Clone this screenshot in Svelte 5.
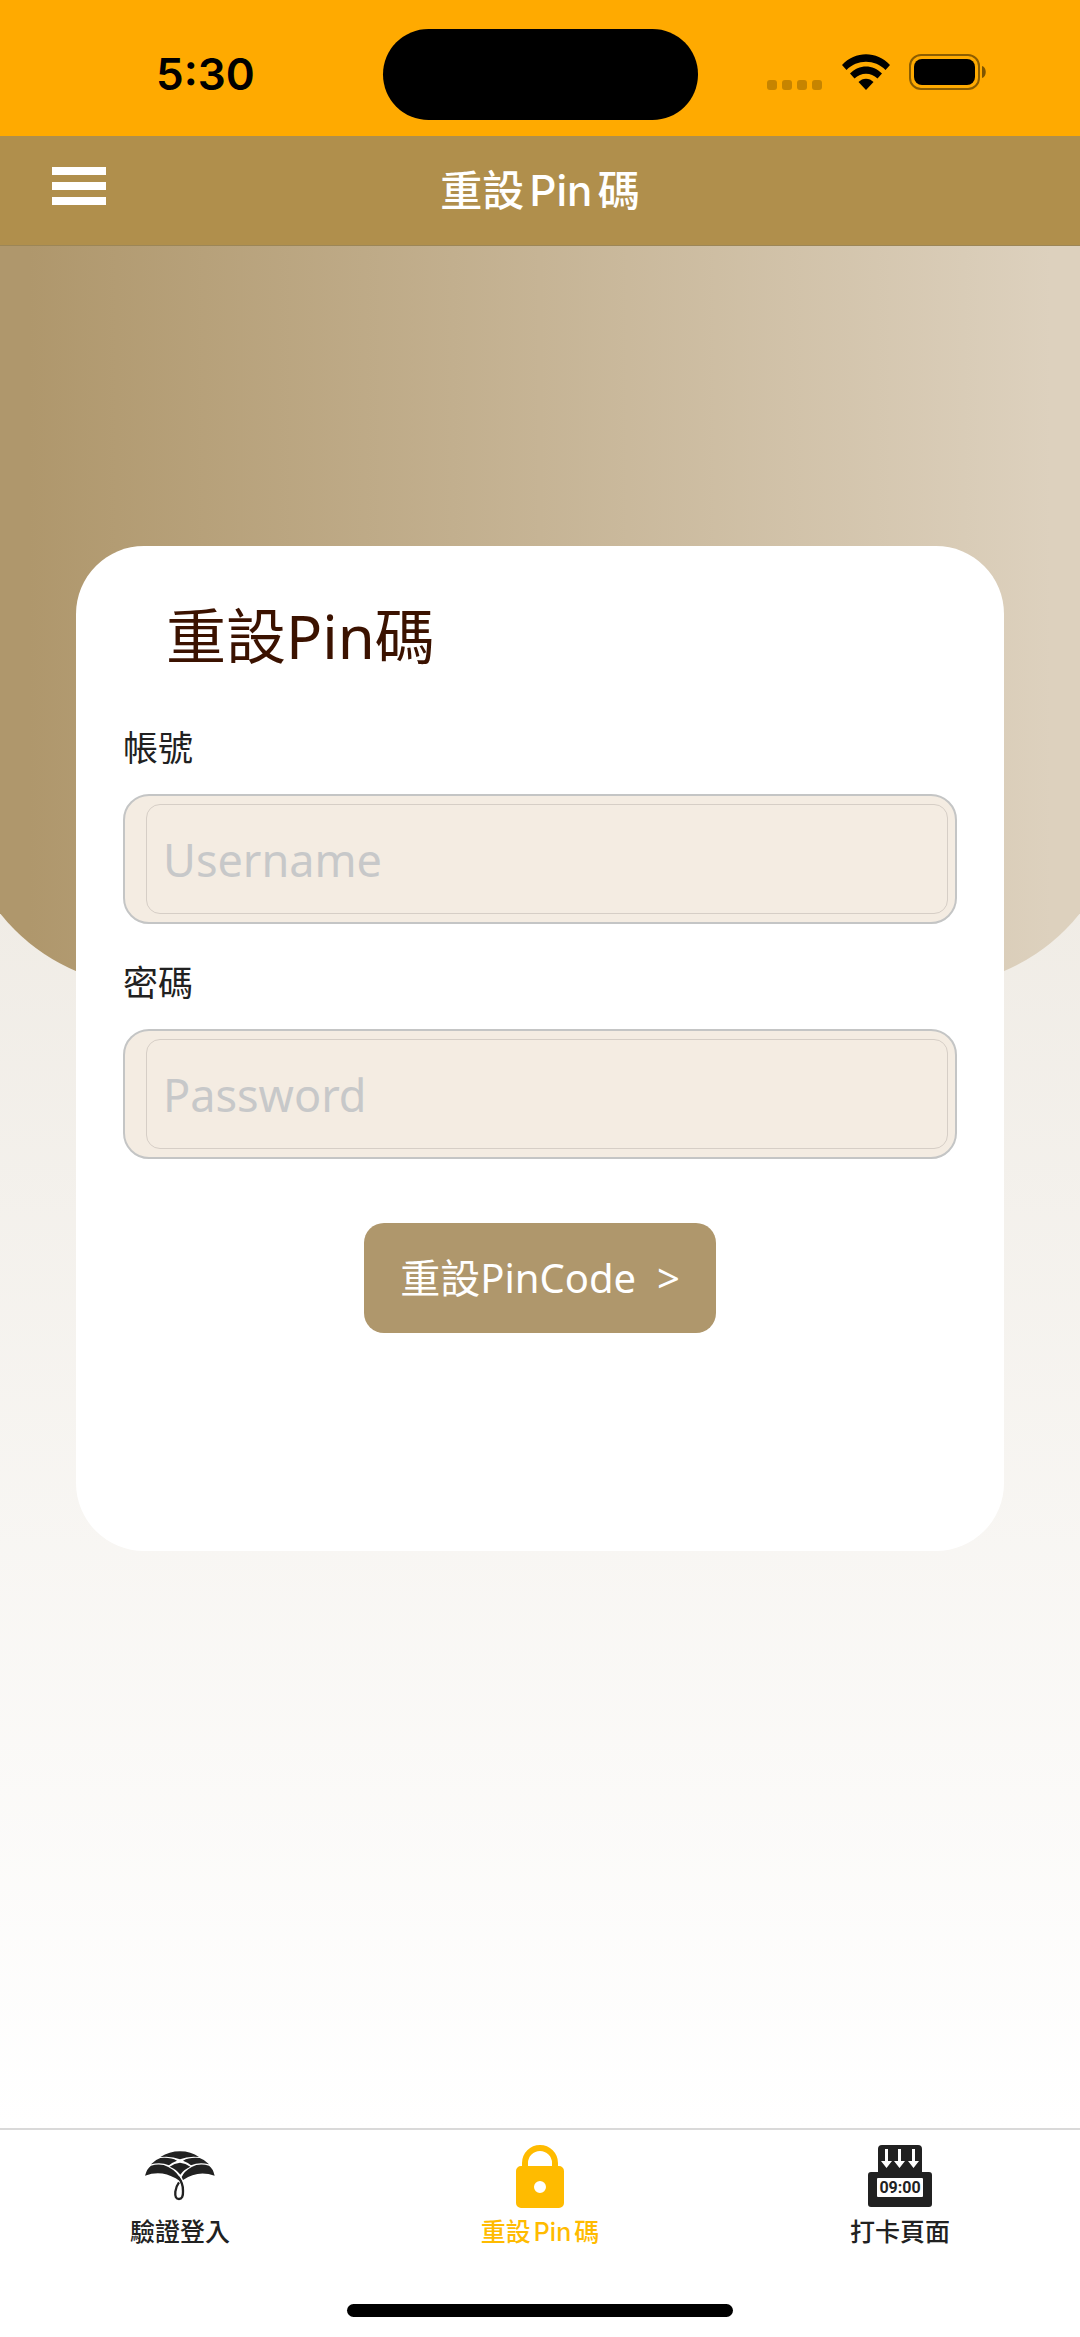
<script lang="ts">
  let username = $state("");
  let password = $state("");

  const tabs = [
    { id: "login", label: "驗證登入" },
    { id: "reset", label: "重設Pin碼" },
    { id: "punch", label: "打卡頁面" },
  ];

  let active = $state("reset");

  function submit(event: SubmitEvent) {
    event.preventDefault();
  }
</script>

<div class="screen">
  <div class="status-bar">
    <span class="time">5:30</span>
    <div class="island"></div>
    <div class="indicators">
      <svg class="dots" width="56" height="10" viewBox="0 0 56 10" aria-hidden="true">
        <rect x="0" width="10" height="10" rx="3" />
        <rect x="15" width="10" height="10" rx="3" />
        <rect x="30" width="10" height="10" rx="3" />
        <rect x="45" width="10" height="10" rx="3" />
      </svg>
      <svg class="wifi" width="48" height="36" viewBox="0 0 48 36" aria-hidden="true">
        <path d="M0 11C13-3.500 35-3.500 48 11l-4.500 5C33 5 15 5 4.500 16z" />
        <path d="M8 19.500c9-9.500 23-9.500 32 0L35.500 24.500c-6.500-6.500-16.500-6.500-23 0z" />
        <path d="M16.500 28c4-4.500 11-4.500 15 0L24 36z" />
      </svg>
      <svg class="battery" width="79" height="36" viewBox="0 0 79 36" aria-hidden="true">
        <rect x="1" y="1" width="69" height="34" rx="11" fill="none" stroke="#000" stroke-opacity=".45" stroke-width="2" />
        <rect x="5" y="5" width="61" height="26" rx="8" />
        <path d="M73 12c5 1 5 11 0 12z" fill-opacity=".5" />
      </svg>
    </div>
  </div>

  <header class="top-bar">
    <button class="menu-button" type="button" aria-label="選單">
      <span></span>
      <span></span>
      <span></span>
    </button>
    <h1>重設Pin碼</h1>
  </header>

  <main>
    <form class="card" onsubmit={submit}>
      <h2>重設Pin碼</h2>

      <label for="username">帳號</label>
      <div class="field">
        <input
          id="username"
          type="text"
          placeholder="Username"
          autocomplete="username"
          bind:value={username}
        />
      </div>

      <label for="password">密碼</label>
      <div class="field">
        <input
          id="password"
          type="password"
          placeholder="Password"
          autocomplete="current-password"
          bind:value={password}
        />
      </div>

      <button class="submit-button" type="submit">重設PinCode&nbsp; &gt;</button>
    </form>
  </main>

  <nav class="tab-bar">
    <div class="tabs">
      {#each tabs as tab (tab.id)}
        <button
          class="tab"
          class:tab--active={active === tab.id}
          type="button"
          onclick={() => (active = tab.id)}
        >
          {#if tab.id === "login"}
            <svg width="72" height="64" viewBox="129 76 216 192" aria-hidden="true">
              <path d="M178 112Q205 95 237 95Q270 95 294 112Q262 108 237 119Q212 108 178 112Z" />
              <path d="M150 134Q162 120 178 115Q208 112 228 123Q214 128 204 137Q180 127 150 134Z" />
              <path d="M324 134Q312 120 296 115Q266 112 246 123Q260 128 270 137Q294 127 324 134Z" />
              <path d="M206 141Q220 131 237 129Q254 131 268 141Q247 150 238 165Q226 149 206 141Z" />
              <path d="M132 168Q138 146 150 138Q180 130 202 142Q230 156 243 186Q234 184 224 176Q180 150 132 168Z" />
              <path d="M341 168Q336 146 324 138Q294 130 272 142Q250 154 242 172L246 181Q290 150 341 168Z" />
              <path
                d="M232 173Q247 192 246 214Q247 238 234 238Q221 238 223 216Q225 200 234 188"
                fill="none"
                stroke="currentColor"
                stroke-width="7"
              />
            </svg>
          {:else if tab.id === "reset"}
            <svg width="50" height="64" viewBox="0 0 50 64" aria-hidden="true">
              <path d="M10 24V18a15 15 0 0 1 30 0v6" fill="none" stroke="currentColor" stroke-width="6" />
              <path
                fill-rule="evenodd"
                d="M6 21h38a5 5 0 0 1 5 5v32a5 5 0 0 1-5 5H6a5 5 0 0 1-5-5V26a5 5 0 0 1 5-5zM25 36a6 6 0 1 0 0 12a6 6 0 1 0 0-12z"
              />
            </svg>
          {:else}
            <svg width="64" height="64" viewBox="0 0 64 64" aria-hidden="true">
              <path d="M10 27V4a4 4 0 0 1 4-4h36a4 4 0 0 1 4 4v23h7a3 3 0 0 1 3 3v29a3 3 0 0 1-3 3H3a3 3 0 0 1-3-3V30a3 3 0 0 1 3-3z" />
              <rect x="9" y="33" width="46" height="19" rx="1" fill="#fff" />
              <path
                d="M17 4h3v12h4l-5.500 7l-5.500-7h4zM30 4h3v12h4l-5.500 7l-5.500-7h4zM44 4h3v12h4l-5.500 7l-5.500-7h4z"
                fill="#fff"
              />
              <text x="32" y="48" text-anchor="middle">09:00</text>
            </svg>
          {/if}
          <span>{tab.label}</span>
        </button>
      {/each}
    </div>
    <div class="home-indicator"></div>
  </nav>
</div>

<style>
  :global(body) {
    margin: 0;
  }

  .screen {
    display: flex;
    flex-direction: column;
    min-height: 100vh;
    font-family: "Noto Sans", "Noto Sans CJK TC", sans-serif;
    color: #212121;
  }

  h1,
  h2 {
    margin: 0;
  }

  button {
    border: 0;
    padding: 0;
    background: none;
    font: inherit;
    color: inherit;
    cursor: pointer;
  }

  .status-bar {
    display: grid;
    grid-template-columns: 1fr auto 1fr;
    align-items: center;
    box-sizing: border-box;
    height: 136px;
    padding: 0 92px 0 156px;
    background: #ffaa00;
    color: #000;
  }

  .time {
    padding-top: 12px;
    font: 600 44px/56px Inter, sans-serif;
  }

  .island {
    width: 315px;
    height: 91px;
    margin: 12px 32px 0 -32px;
    border-radius: 46px;
    background: #000;
  }

  .indicators {
    display: flex;
    align-items: flex-end;
    justify-content: flex-end;
    gap: 19px;
    padding-top: 8px;
  }

  .dots {
    opacity: 0.22;
  }

  .top-bar {
    display: grid;
    grid-template-columns: 1fr auto 1fr;
    align-items: center;
    box-sizing: border-box;
    height: 110px;
    padding: 0 52px;
    border-bottom: 1px solid #9c8657;
    background: #b08f4c;
    color: #fff;
  }

  .menu-button {
    display: grid;
    gap: 7px;
    width: 54px;
    padding-bottom: 10px;
  }

  .menu-button span {
    height: 8px;
    background: #fff;
  }

  h1 {
    font: 500 42px/58px Inter, "Noto Sans CJK TC", sans-serif;
    text-autospace: normal;
  }

  main {
    position: relative;
    isolation: isolate;
    overflow: hidden;
    flex: 1;
    padding: 300px 76px;
    background: linear-gradient(to bottom, #e8e2d8, #fff);
  }

  main::before {
    position: absolute;
    inset: 0 -41px auto;
    z-index: -1;
    height: 740px;
    border-radius: 0 0 191px 191px;
    background: linear-gradient(to right, #af976c 6%, #ddd1be 94%);
    content: "";
  }

  .card {
    display: flex;
    flex-direction: column;
    padding: 50px 47px 218px;
    border-radius: 68px;
    background: #fff;
  }

  h2 {
    padding-left: 43px;
    font-size: 60px;
    font-weight: 400;
    line-height: 80px;
    color: #3b1200;
  }

  label {
    margin-top: 39px;
    font-size: 35px;
    line-height: 40px;
  }

  h2 + label {
    margin-top: 52px;
  }

  .field {
    margin-top: 26px;
    padding: 8px 7px 8px 21px;
    border: 2px solid #c4c5c5;
    border-radius: 26px;
    background: #f4ece2;
  }

  .field input {
    display: block;
    box-sizing: border-box;
    width: 100%;
    height: 110px;
    padding: 0 16px;
    border: 1px solid #d6cec6;
    border-radius: 14px;
    background: none;
    font: inherit;
    font-size: 45px;
    color: #212121;
  }

  .field input::placeholder {
    color: #c7c8c9;
    opacity: 1;
  }

  .submit-button {
    align-self: center;
    margin-top: 64px;
    padding: 0 36px;
    border-radius: 20px;
    background: #af976c;
    font-size: 40px;
    line-height: 110px;
    color: #fff;
  }

  .tab-bar {
    border-top: 2px solid #d9d9d9;
    padding-bottom: 20px;
    background: #fff;
  }

  .tabs {
    display: grid;
    grid-template-columns: repeat(3, 1fr);
    padding: 15px 0 55px;
  }

  .tab {
    display: grid;
    justify-items: center;
    gap: 6px;
    font: 500 25px/34px Inter, "Noto Sans CJK TC", sans-serif;
    text-autospace: normal;
  }

  .tab svg {
    fill: currentColor;
  }

  .tab text {
    font: 700 16px Roboto, sans-serif;
  }

  .tab--active {
    color: #ffbb00;
  }

  .home-indicator {
    width: 386px;
    height: 13px;
    margin: 0 auto;
    border-radius: 7px;
    background: #000;
  }
</style>
